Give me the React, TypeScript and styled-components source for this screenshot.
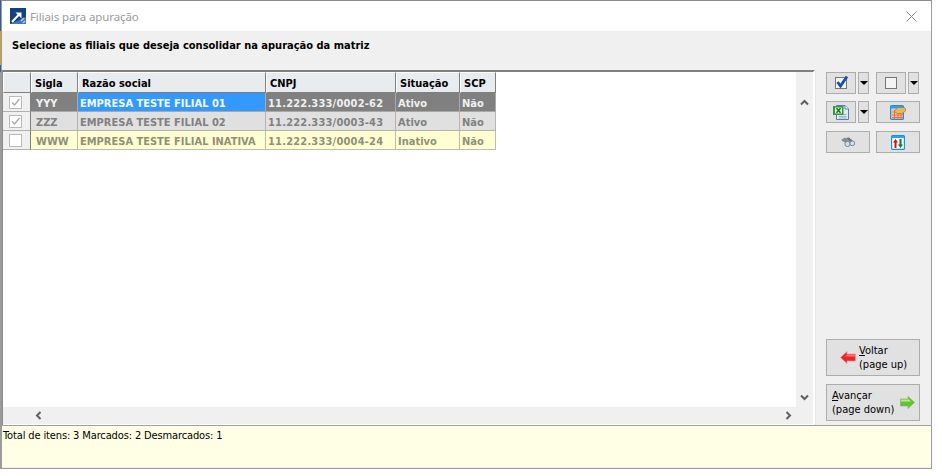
import React from "react";
import styled, { createGlobalStyle } from "styled-components";

const Global = createGlobalStyle`
  html, body { margin: 0; padding: 0; background: #fff; }
  body { font-family: "DejaVu Sans Condensed", "DejaVu Sans", sans-serif; font-size: 11px; color: #000; }
`;
const Page = styled.div`display: flex; width: 946px; height: 476px; align-items: flex-start; overflow: hidden;`;
const DesktopEdge = styled.div`
  width: 1px; height: 100%;
  background: linear-gradient(#2f5f9f 0 31px, #c9a33a 31px 65px, #2f5f9f 65px 72px, #9a9a9a 72px 469px, #fff 469px);
`;
const Window = styled.div`
  width: 931px; height: 469px; box-sizing: border-box;
  border: 1px solid #9c9c9c; border-top-color: #8c8c8c;
  background: #f0f0f0; display: flex; flex-direction: column;
`;
const TitleBar = styled.div`
  height: 30px; background: #fff; display: flex; align-items: center; padding: 0 14px 0 8px; gap: 4px; flex: none;
`;
const TitleText = styled.span`color: #9b9b9b; font-family: "Noto Sans", sans-serif; font-size: 11.5px; letter-spacing: -0.1px; flex: 1;`;
const Heading = styled.div`
  height: 39px; flex: none; box-sizing: border-box; padding: 8px 0 0 10px;
  font-weight: 700; font-size: 11px; line-height: 14px;
`;
const Main = styled.div`flex: 1; display: flex; min-height: 0;`;
const GridFrame = styled.div`
  width: 813px; flex: none; display: flex; flex-direction: column; background: #fff;
  border-top: 2px solid #7f7f7f; border-left: 1px solid #8a8a8a; box-sizing: border-box;
  border-right: 2px solid #fff;
`;
const GridBody = styled.div`flex: 1; display: flex; min-height: 0;`;
const TableWrap = styled.div`flex: 1;`;
const Table = styled.table`
  border-collapse: separate; border-spacing: 0; table-layout: fixed; width: 493px; font-size: 11px; font-weight: 700;
`;
const Th = styled.th<{ $w: number }>`
  width: ${(p) => p.$w}px; height: 21px; box-sizing: border-box; padding: 1px 0 0 3px; text-align: left;
  background: #e9ecef; color: #000; font-weight: 700; font-size: 11px;
  border-top: 1px solid #fff; border-left: 1px solid #fff;
  border-right: 1px solid #7f7f7f; border-bottom: 1px solid #7f7f7f;
`;
const tones = {
  selected: { bg: "#808080", fg: "#f0f0f0", line: "#a9a9a9" },
  muted: { bg: "#e0e0e0", fg: "#808080", line: "#b4b4b4" },
  inactive: { bg: "#ffffd2", fg: "#909078", line: "#bcbcb0" },
  focus: { bg: "#3399ff", fg: "#f4f9ff", line: "#a9a9a9" },
};
type Tone = keyof typeof tones;
const Td = styled.td<{ $t: Tone; $sp?: number }>`
  height: 19px; box-sizing: border-box; padding: 2px 0 0 2px; white-space: nowrap; overflow: hidden;
  letter-spacing: ${(p) => p.$sp ?? 0}px;
  background: ${(p) => tones[p.$t].bg}; color: ${(p) => tones[p.$t].fg};
  border-right: 1px solid ${(p) => tones[p.$t].line}; border-bottom: 1px solid ${(p) => tones[p.$t].line};
`;
const SiglaTd = styled(Td)`padding-left: 5px;`;
const CheckTd = styled.td`
  height: 19px; box-sizing: border-box; background: #f0f0f0; padding: 0 2px 0 0; text-align: center;
  border-right: 1px solid #7f7f7f; border-bottom: 1px solid #b0b0b0; line-height: 0;
`;
const CheckBox = styled.span`
  display: inline-flex; width: 13px; height: 13px; box-sizing: border-box; background: #fff; border: 1px solid #b9b9b9;
  align-items: center; justify-content: center;
`;
const VBar = styled.div`
  width: 17px; flex: none; background: #f0f0f0; display: flex; flex-direction: column;
  justify-content: space-between; align-items: center; padding: 27px 0 6px; box-sizing: border-box;
`;
const HBar = styled.div`
  height: 17px; flex: none; background: #f0f0f0; display: flex; align-items: center;
  justify-content: space-between; padding: 0 20px 0 31px; box-sizing: border-box;
`;
const GridBottom = styled.div`height: 1px; flex: none; background: #fff;`;
const Side = styled.div`
  flex: 1; border-left: 1px solid #e6e6e6; box-sizing: border-box; padding: 2px 11px 4px 10px;
  display: flex; flex-direction: column; justify-content: space-between; background: #f0f0f0;
`;
const ToolGrid = styled.div`
  display: grid; grid-template-columns: 44px 44px; justify-content: space-between; grid-auto-rows: 22px; row-gap: 7px;
`;
const SplitGroup = styled.div`display: flex; gap: 2px;`;
const Btn = styled.button<{ $w: number; $low?: boolean }>`
  width: ${(p) => p.$w}px; height: 22px; box-sizing: border-box; padding: 0; margin: ${(p) => (p.$low ? "1px 0 0" : "0")};
  border: 1px solid #adadad; outline: 0; background: #e1e1e1; display: flex; align-items: center; justify-content: center;
`;
const Caret = styled.span`width: 0; height: 0; border-left: 4px solid transparent; border-right: 4px solid transparent; border-top: 4px solid #000;`;
const NavGroup = styled.div`display: flex; flex-direction: column; gap: 8px;`;
const NavBtn = styled.button<{ $pad: number; $gap: number }>`
  width: 94px; height: 37px; box-sizing: border-box; margin: 0; padding: 0 0 0 ${(p) => p.$pad}px;
  border: 1px solid #adadad; background: #e1e1e1; display: flex; align-items: center; gap: ${(p) => p.$gap}px;
  font: 11px/14px "DejaVu Sans Condensed", "DejaVu Sans", sans-serif; color: #000; text-align: left;
`;
const U = styled.span`text-decoration: underline;`;
const Footer = styled.div`
  height: 42px; flex: none; box-sizing: border-box; background: #ffffe6; border-top: 1px solid #a0a0a0;
  padding: 3px 0 0 1px; font-size: 11px; line-height: 14px; color: #000; letter-spacing: -0.13px;
`;
const FooterEdge = styled.div`height: 1px; flex: none; background: #f0f0f0;`;

const Chevron = ({ r }: { r: number }) => (
  <svg width="9" height="7" viewBox="0 0 9 7" style={{ transform: `rotate(${r}deg)` }}>
    <path d="M1 5.5 L4.5 2 L8 5.5" fill="none" stroke="#5f5f5f" strokeWidth="2" />
  </svg>
);
const AppIcon = () => (
  <svg width="16" height="16" viewBox="0 0 16 16">
    <rect width="16" height="16" fill="#14407f" />
    <path d="M0 16 L16 16 L16 9 Z" fill="#3f78c2" />
    <path d="M2 14 L9 6.5" stroke="#fff" strokeWidth="2" />
    <path d="M5.5 4.5 H11.5 V10.5 Z" fill="#fff" />
    <path d="M11 13 l3 -3 M13 15 l2 -2" stroke="#b9cbe6" strokeWidth="1.5" />
  </svg>
);
const Close = () => (
  <svg width="11" height="11" viewBox="0 0 11 11"><path d="M0.5 0.5 L10.5 10.5 M10.5 0.5 L0.5 10.5" stroke="#8a8a8a" fill="none" /></svg>
);
const BoxIcon = ({ on }: { on?: boolean }) => (
  <svg width="14" height="14" viewBox="0 0 14 14" style={{ overflow: "visible" }}>
    <rect x="1.5" y="1.5" width="11" height="11" fill="#f4f4f4" stroke="#777" />
    {on && <path d="M3.5 6 L6.5 10 L13 0.5" fill="none" stroke="#1a4fa8" strokeWidth="2.8" />}
  </svg>
);
const MiniCheck = () => (
  <svg width="11" height="11" viewBox="0 0 11 11"><path d="M2 5.5 L4.5 8 L9.5 2" fill="none" stroke="#a8a8a8" strokeWidth="1.3" /></svg>
);
const Excel = () => (
  <svg width="16" height="15" viewBox="0 0 16 15">
    <path d="M3.5 0.5 H12 L15.5 4 V14.5 H3.5 Z" fill="#dfe8f5" stroke="#5a7fb0" />
    <path d="M12 0.5 V4 H15.5" fill="#fff" stroke="#5a7fb0" />
    <path d="M6 9.5 H13.5 M6 11.5 H13.5 M6 13 H13.5" stroke="#9db6d6" />
    <rect x="0" y="1" width="10.5" height="9" fill="#2f9a3f" />
    <rect x="2" y="2.5" width="7" height="6" fill="#d9f0c9" />
    <path d="M3.5 3.2 L7.5 7.8 M7.5 3.2 L3.5 7.8" stroke="#1b6d2a" strokeWidth="1.4" />
  </svg>
);
const HandTable = () => (
  <svg width="16" height="15" viewBox="0 0 16 15">
    <rect x="0.6" y="0.6" width="12.8" height="13.8" rx="1" fill="#f9c7a8" stroke="#1c8fe0" strokeWidth="1.2" />
    <rect x="1" y="1" width="12" height="2.5" fill="#2aa0ee" />
    <path d="M2 7 H13 M2 10 H13 M2 12.5 H13 M4.5 5 V14 M8 5 V14 M11 5 V14" stroke="#ef6a3a" strokeWidth="0.9" />
    <path d="M4 6 L8 2.5 H14.5 Q16.5 3.5 15.5 6 L12 8.5 H7 Z" fill="#e9b75f" stroke="#a5782d" strokeWidth="0.7" />
  </svg>
);
const Binoculars = () => (
  <svg width="14" height="10" viewBox="0 0 14 10">
    <path d="M0 3 L4 0.5 L9 5 L6 7 Z" fill="#8a8a8a" />
    <path d="M5 1 L8 0.5 L12 4 L9 5 Z" fill="#6f6f6f" />
    <circle cx="6.5" cy="7" r="2.6" fill="#cfe0f2" stroke="#7a8794" />
    <circle cx="11.3" cy="6.3" r="2.4" fill="#cfe0f2" stroke="#7a8794" />
  </svg>
);
const SortIcon = () => (
  <svg width="14" height="15" viewBox="0 0 14 15">
    <rect x="0.6" y="0.6" width="12.8" height="13.8" rx="1" fill="#fff" stroke="#1c8fe0" strokeWidth="1.2" />
    <rect x="1" y="1" width="12" height="2" fill="#2aa0ee" />
    <path d="M4.5 4 L7 7.5 H5.5 V13 H3.5 V7.5 H2 Z" fill="#e01010" />
    <path d="M9.5 13 L12 9.5 H10.5 V4 H8.5 V9.5 H7 Z" fill="#107a30" />
  </svg>
);
const LeftArrow = () => (
  <svg width="16" height="13" viewBox="0 0 16 13">
    <path d="M0.5 6.5 L7 0.5 V3 H15.5 V10 H7 V12.5 Z" fill="#f0222c" stroke="#d8a0a0" strokeWidth="0.7" />
    <path d="M7 3.5 H15 V5.5 H5 Z" fill="#ff7070" />
  </svg>
);
const RightArrow = () => (
  <svg width="15" height="13" viewBox="0 0 15 13">
    <path d="M14.5 6.5 L8 0.5 V3 H0.5 V10 H8 V12.5 Z" fill="#58c62f" stroke="#8fae80" strokeWidth="0.7" />
    <path d="M1 3.5 H9 L11 5.5 H1 Z" fill="#b4ee8a" />
  </svg>
);

const rows: { s: string; n: string; c: string; st: string; scp: string; tone: Tone; checked: boolean; focus?: boolean }[] = [
  { s: "YYY", n: "EMPRESA TESTE FILIAL 01", c: "11.222.333/0002-62", st: "Ativo", scp: "Não", tone: "selected", checked: true, focus: true },
  { s: "ZZZ", n: "EMPRESA TESTE FILIAL 02", c: "11.222.333/0003-43", st: "Ativo", scp: "Não", tone: "muted", checked: true },
  { s: "WWW", n: "EMPRESA TESTE FILIAL INATIVA", c: "11.222.333/0004-24", st: "Inativo", scp: "Não", tone: "inactive", checked: false },
];

export default function App() {
  return (
    <Page>
      <Global />
      <DesktopEdge />
      <Window>
        <TitleBar>
          <AppIcon />
          <TitleText>Filiais para apuração</TitleText>
          <Close />
        </TitleBar>
        <Heading>Selecione as filiais que deseja consolidar na apuração da matriz</Heading>
        <Main>
          <GridFrame>
            <GridBody>
              <TableWrap>
                <Table>
                  <thead>
                    <tr>
                      <Th $w={28} />
                      <Th $w={47}>Sigla</Th>
                      <Th $w={188}>Razão social</Th>
                      <Th $w={130}>CNPJ</Th>
                      <Th $w={64}>Situação</Th>
                      <Th $w={36}>SCP</Th>
                    </tr>
                  </thead>
                  <tbody>
                    {rows.map((r) => (
                      <tr key={r.s}>
                        <CheckTd>
                          <CheckBox>{r.checked && <MiniCheck />}</CheckBox>
                        </CheckTd>
                        <SiglaTd $t={r.tone}>{r.s}</SiglaTd>
                        <Td $t={r.focus ? "focus" : r.tone}>{r.n}</Td>
                        <Td $t={r.tone} $sp={0.2}>{r.c}</Td>
                        <Td $t={r.tone}>{r.st}</Td>
                        <Td $t={r.tone}>{r.scp}</Td>
                      </tr>
                    ))}
                  </tbody>
                </Table>
              </TableWrap>
              <VBar>
                <Chevron r={0} />
                <Chevron r={180} />
              </VBar>
            </GridBody>
            <HBar>
              <Chevron r={-90} />
              <Chevron r={90} />
            </HBar>
            <GridBottom />
          </GridFrame>
          <Side>
            <ToolGrid>
              <SplitGroup>
                <Btn $w={30}><BoxIcon on /></Btn>
                <Btn $w={11}><Caret /></Btn>
              </SplitGroup>
              <SplitGroup>
                <Btn $w={30}><BoxIcon /></Btn>
                <Btn $w={11}><Caret /></Btn>
              </SplitGroup>
              <SplitGroup>
                <Btn $w={30}><Excel /></Btn>
                <Btn $w={11}><Caret /></Btn>
              </SplitGroup>
              <Btn $w={44}><HandTable /></Btn>
              <Btn $w={44} $low><Binoculars /></Btn>
              <Btn $w={44} $low><SortIcon /></Btn>
            </ToolGrid>
            <NavGroup>
              <NavBtn $pad={13} $gap={3}>
                <LeftArrow />
                <span><U>V</U>oltar<br />(page up)</span>
              </NavBtn>
              <NavBtn $pad={5} $gap={6}>
                <span><U>A</U>vançar<br />(page down)</span>
                <RightArrow />
              </NavBtn>
            </NavGroup>
          </Side>
        </Main>
        <Footer>Total de itens: 3 Marcados: 2 Desmarcados: 1</Footer>
        <FooterEdge />
      </Window>
    </Page>
  );
}
